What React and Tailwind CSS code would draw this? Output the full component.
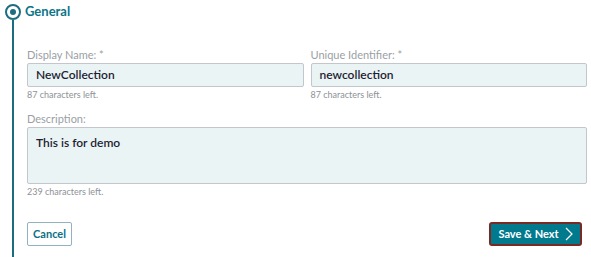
import React from 'react';

// Single text field with label and remaining-characters hint
function Field({ label, value, hint }) {
  return (
    <div className="flex flex-col">
      <label className="text-[11px] leading-[14px] text-[#9a9fa5] mb-[1px]">{label}</label>
      <div className="h-[24px] bg-[#ebf4f5] border border-[#c3c7cb] rounded-[2px] flex items-center px-[8px] text-[12px] font-semibold text-[#1e1e32]">
        {value}
      </div>
      <span className="text-[9px] leading-[12px] mt-[2px] text-[#8d9297]">{hint}</span>
    </div>
  );
}

export default function App() {
  return (
    <div className="w-[591px] h-[257px] bg-white flex overflow-hidden" style={{ fontFamily: 'Lato, "Open Sans", sans-serif' }}>
      {/* Step rail */}
      <div className="w-[25px] flex flex-col items-center pt-[4px]">
        <div className="w-[16px] h-[16px] rounded-full border-2 border-[#1d6d80] flex items-center justify-center shrink-0">
          <div className="w-[6px] h-[6px] rounded-full bg-[#1d6d80]" />
        </div>
        <div className="w-[2px] flex-1 bg-[#1d6d80]" />
      </div>

      <div className="flex-1 flex flex-col pr-[4px]">
        {/* Step heading */}
        <div className="h-[24px] flex items-center text-[13px] font-bold text-[#0b7489]">General</div>

        <div className="pl-[2px] flex flex-col mt-[24px]">
          <div className="grid grid-cols-2 gap-[7px]">
            <Field label="Display Name: *" value="NewCollection" hint="87 characters left." />
            <Field label="Unique Identifier: *" value="newcollection" hint="87 characters left." />
          </div>

          <div className="flex flex-col mt-[11px]">
            <label className="text-[11px] leading-[14px] text-[#9a9fa5] mb-[1px]">Description:</label>
            <div className="h-[57px] bg-[#ebf4f5] border border-[#c3c7cb] rounded-[2px] px-[8px] pt-[6px] text-[12px] font-semibold text-[#1e1e32]">
              This is for demo
            </div>
            <span className="text-[9px] leading-[12px] mt-[2px] text-[#8d9297]">239 characters left.</span>
          </div>

          {/* Actions */}
          <div className="flex justify-between items-center mt-[24px]">
            <button className="h-[24px] w-[45px] border border-[#8fb3c0] rounded-[2px] text-[11px] font-bold text-[#0b6f85] bg-white">
              Cancel
            </button>
            <button className="mr-[5px] h-[24px] w-[93px] border-2 border-[#7a2a22] rounded-[3px] bg-[#017a8e] text-white text-[11px] font-bold flex items-center justify-center gap-[6px]">
              Save &amp; Next
              <svg width="8" height="14" viewBox="0 0 8 14" fill="none">
                <path d="M1 1l6 6-6 6" stroke="white" strokeWidth="1.2" />
              </svg>
            </button>
          </div>
        </div>
      </div>
    </div>
  );
}
